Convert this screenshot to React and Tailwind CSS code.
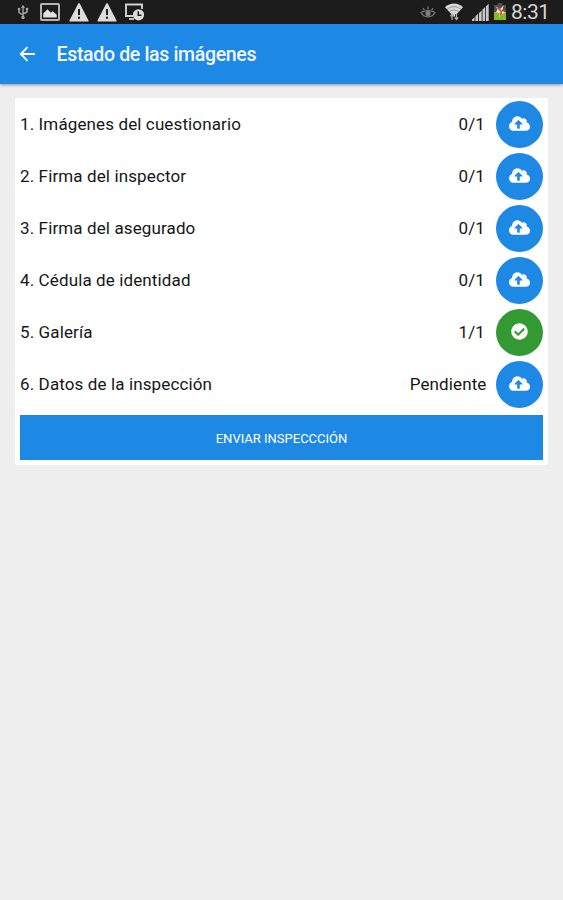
import React from 'react';
import { FaCloudUploadAlt, FaCheckCircle } from 'react-icons/fa';

const ITEMS = [
  { label: '1. Imágenes del cuestionario', status: '0/1' },
  { label: '2. Firma del inspector', status: '0/1' },
  { label: '3. Firma del asegurado', status: '0/1' },
  { label: '4. Cédula de identidad', status: '0/1' },
  { label: '5. Galería', status: '1/1', done: true },
  { label: '6. Datos de la inspección', status: 'Pendiente' },
];

function Warning() {
  return (
    <svg width="20" height="20" viewBox="0 0 20 20">
      <path d="M10 1.8 18.8 18.8H1.2Z" fill="#dcdcdc" stroke="#dcdcdc" strokeWidth="1.6" strokeLinejoin="round" />
      <path d="M10 7v6M10 14.7v2" stroke="#1d1d1d" strokeWidth="2" />
    </svg>
  );
}

function StatusBar() {
  return (
    <div className="flex h-[23.5px] shrink-0 items-center justify-between bg-[#1c1c1c] pl-[17px] pr-[14px]">
      <div className="flex items-center">
        {/* USB */}
        <svg width="12" height="16" viewBox="0 0 12 16" fill="none" stroke="#a5a5a5" strokeWidth="1.4">
          <path d="M6 3v10M2 5.5v3l4 2.5M10 5.5V8L6 10" />
          <path d="M6 0.8 8 4H4Z" fill="#a5a5a5" stroke="none" />
          <circle cx="6" cy="13.5" r="1.7" fill="#a5a5a5" stroke="none" />
          <circle cx="2" cy="5" r="1.3" fill="#a5a5a5" stroke="none" />
          <path d="M8.8 3.8h2.4v2.4H8.8Z" fill="#a5a5a5" stroke="none" />
        </svg>
        {/* Gallery */}
        <svg className="ml-[11px]" width="20" height="18" viewBox="0 0 20 18">
          <rect x="1" y="1" width="18" height="16" rx="0.8" fill="#1c1c1c" stroke="#b4b4b4" strokeWidth="2" />
          <path d="M3.3 14.5V10.5l4.2-4.3 3.3 3.6 2-1.5 3.9 3.5v2.7Z" fill="#e2e2e2" />
        </svg>
        <span className="ml-[8.5px]"><Warning /></span>
        <span className="ml-[8px]"><Warning /></span>
        {/* Scheduled screen */}
        <svg className="ml-[7px]" width="22" height="18" viewBox="0 0 22 18">
          <path d="M9 13H2V1.5h16V6" fill="none" stroke="#d2d2d2" strokeWidth="1.9" />
          <path d="M5 16h5" stroke="#d2d2d2" strokeWidth="1.8" />
          <circle cx="14.5" cy="11.8" r="5.6" fill="#dcdcdc" />
          <path d="M14.3 8.3v4h3.2" fill="none" stroke="#1c1c1c" strokeWidth="1.5" />
        </svg>
      </div>
      <div className="flex items-center">
        {/* Smart stay eye */}
        <svg width="16" height="14" viewBox="0 0 16 14" fill="none" stroke="#777777" strokeWidth="1.3">
          <path d="M1 7.5C4 5 12 5 15 7.5C12 13.2 4 13.2 1 7.5Z" />
          <circle cx="8" cy="8.5" r="2" fill="#8a8a8a" />
          <path d="M3 3 4.3 5M8 1.5v3M13 3l-1.3 2" />
        </svg>
        {/* Wi-Fi */}
        <svg className="ml-[8px]" width="20" height="19" viewBox="0 0 20 19">
          <path d="M1 5.2C6 0.3 14 0.3 19 5.2L10 15Z" fill="#d8d8d8" />
          <path d="M3 7.5C7 3.7 13 3.7 17 7.5M5.2 10c2.8-2.6 6.8-2.6 9.6 0" fill="none" stroke="#777777" strokeWidth="0.7" />
          <path d="M8 18v-5.5M12.5 12v5.5" fill="none" stroke="#1c1c1c" strokeWidth="2.6" />
          <path d="M8 18v-5.5M6.3 14.3 8 12.3l1.7 2M12.5 12v5.5M10.8 15.5l1.7 2 1.7-2" fill="none" stroke="#aaaaaa" strokeWidth="1.3" />
        </svg>
        {/* Signal */}
        <svg className="ml-[7px]" width="18" height="18" viewBox="0 0 18 18" fill="#c8c8c8">
          <path d="M1 16.5 3.6 14.2V18H1ZM4.4 13.3 7.1 10.8V18H4.4ZM8 9.9l2.7-2.5V18H8ZM11.5 6.6 14.2 4V18h-2.7ZM15 3.2 17.7 0.8V18H15Z" />
        </svg>
        {/* Battery */}
        <svg className="ml-[4px]" width="14" height="19" viewBox="0 0 14 19">
          <path d="M4.5 1h5v2H13v15H1V3h3.5Z" fill="#50504a" />
          <path d="M1 10h12v8H1Z" fill="#83bb20" />
          <path d="M3 4.5 7 7l3.8-3.5L9 9l3 1-6 5 .8-4L3 10.2l1.4-2.6Z" fill="#f1e7e1" />
          <path d="m4.5 5.5 4 4-1 4" fill="none" stroke="#d83a27" strokeWidth="1.6" />
        </svg>
        <span className="ml-[4px] w-[38px] whitespace-nowrap pt-px text-[21px] leading-[24px] tracking-[-0.5px] text-[#d5d5d5]">8:31</span>
      </div>
    </div>
  );
}

export default function App() {
  return (
    <div className="flex h-[900px] w-[563px] flex-col overflow-hidden bg-[#eeeeee] font-[Roboto,sans-serif]">
      <StatusBar />
      <header className="relative flex h-[60px] shrink-0 items-center bg-[#1e88e5] pl-[19px] text-white shadow-[0_1px_3px_rgba(0,0,0,0.4)]">
        <svg width="17" height="16" viewBox="0 0 17 16" fill="none" stroke="currentColor" strokeWidth="1.9">
          <path d="M16 8H2M8.5 1.2 1.8 8l6.7 6.8" />
        </svg>
        <h1 className="ml-[20.5px] pt-[2px] text-[19.5px] font-medium tracking-[-0.33px] text-[#f3f8fe]">Estado de las imágenes</h1>
      </header>

      <main className="mx-[15px] mt-[14.5px] rounded-[2px] bg-white pb-[5px] pl-[5px] pr-[5px]">
        {ITEMS.map((item) => (
          <div key={item.label} className="flex h-[52px] items-center text-[17px] tracking-[0.12px] text-[#161616]">
            <span className="flex-1 pt-[2px]">{item.label}</span>
            <span className={item.status === 'Pendiente' ? 'mr-[9.5px] pt-[2px]' : 'mr-[11px] pt-[2px]'}>
              {item.status}
            </span>
            <button
              className={`flex size-[47px] items-center justify-center rounded-full text-white ${
                item.done ? 'bg-[#339933]' : 'bg-[#1e88e5]'
              }`}
            >
              {item.done ? <FaCheckCircle className="mb-px" size={17} /> : <FaCloudUploadAlt className="mb-[2px]" size={21} />}
            </button>
          </div>
        ))}
        <button className="mt-[5px] flex h-[45px] w-full items-center justify-center bg-[#1e88e5] pt-[2px] text-[13px] text-white">
          ENVIAR INSPECCCIÓN
        </button>
      </main>
    </div>
  );
}
